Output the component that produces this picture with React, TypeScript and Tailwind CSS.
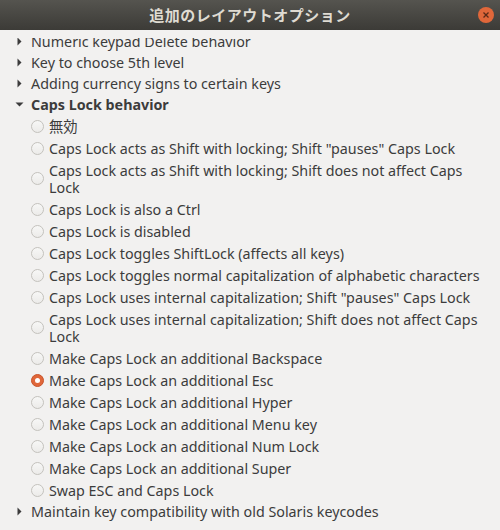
import React from "react";

type Item =
  | { kind: "tree"; label: string; open?: boolean; bold?: boolean }
  | { kind: "radio"; label: string; checked?: boolean; two?: boolean };

const items: Item[] = [
  { kind: "tree", label: "Numeric keypad Delete behavior" },
  { kind: "tree", label: "Key to choose 5th level" },
  { kind: "tree", label: "Adding currency signs to certain keys" },
  { kind: "tree", label: "Caps Lock behavior", open: true, bold: true },
  { kind: "radio", label: "無効" },
  { kind: "radio", label: 'Caps Lock acts as Shift with locking; Shift "pauses" Caps Lock' },
  { kind: "radio", label: "Caps Lock acts as Shift with locking; Shift does not affect Caps Lock", two: true },
  { kind: "radio", label: "Caps Lock is also a Ctrl" },
  { kind: "radio", label: "Caps Lock is disabled" },
  { kind: "radio", label: "Caps Lock toggles ShiftLock (affects all keys)" },
  { kind: "radio", label: "Caps Lock toggles normal capitalization of alphabetic characters" },
  { kind: "radio", label: 'Caps Lock uses internal capitalization; Shift "pauses" Caps Lock' },
  { kind: "radio", label: "Caps Lock uses internal capitalization; Shift does not affect Caps Lock", two: true },
  { kind: "radio", label: "Make Caps Lock an additional Backspace" },
  { kind: "radio", label: "Make Caps Lock an additional Esc", checked: true },
  { kind: "radio", label: "Make Caps Lock an additional Hyper" },
  { kind: "radio", label: "Make Caps Lock an additional Menu key" },
  { kind: "radio", label: "Make Caps Lock an additional Num Lock" },
  { kind: "radio", label: "Make Caps Lock an additional Super" },
  { kind: "radio", label: "Swap ESC and Caps Lock" },
  { kind: "tree", label: "Maintain key compatibility with old Solaris keycodes" },
];

function Radio({ checked }: { checked?: boolean }) {
  if (checked)
    return (
      <span className="w-[13px] h-[13px] rounded-full bg-[#e0673a] border border-[#c9542b] flex items-center justify-center shrink-0">
        <span className="w-[5px] h-[5px] rounded-full bg-white" />
      </span>
    );
  return (
    <span className="w-[13px] h-[13px] rounded-full border border-[#c4c2bd] bg-gradient-to-b from-[#f7f7f6] to-[#ecebe9] shrink-0" />
  );
}

function Arrow({ open }: { open?: boolean }) {
  return open ? (
    <svg width="9" height="9" viewBox="0 0 9 9" className="shrink-0">
      <polygon points="0.5,2.5 8.5,2.5 4.5,6.5" fill="#3c3c3c" />
    </svg>
  ) : (
    <svg width="9" height="9" viewBox="0 0 9 9" className="shrink-0">
      <polygon points="2.5,0.5 6.5,4.5 2.5,8.5" fill="#3c3c3c" />
    </svg>
  );
}

export default function App() {
  return (
    <div
      className="w-[500px] h-[530px] bg-[#f2f1f0] flex flex-col overflow-hidden text-[#3c3c3c]"
      style={{ fontFamily: '"Noto Sans", "Noto Sans CJK JP", sans-serif' }}
    >
      <div className="h-[30px] shrink-0 bg-gradient-to-b from-[#55544f] to-[#3c3b37] flex items-center justify-center relative">
        <span className="text-[15px] font-semibold text-[#dfdbd2] tracking-[0.5px]">追加のレイアウトオプション</span>
        <span className="absolute right-[6px] top-[7px] w-[16px] h-[16px] rounded-full bg-[#e0673a] flex items-center justify-center">
          <svg width="8" height="8" viewBox="0 0 8 8">
            <path d="M1.5 1.5 L6.5 6.5 M6.5 1.5 L1.5 6.5" stroke="#5a2a18" strokeWidth="1.3" />
          </svg>
        </span>
      </div>
      <div className="flex-1 pt-[8px] flex flex-col min-h-0">
        <div className="flex-1 overflow-hidden">
          <div className="flex flex-col mt-[-7px] text-[14.3px]">
            {items.map((it, i) =>
              it.kind === "tree" ? (
                <div key={i} className="h-[21px] flex items-center pl-[15px] gap-[7px] whitespace-nowrap">
                  <Arrow open={it.open} />
                  <span className={it.bold ? "font-bold" : ""}>{it.label}</span>
                </div>
              ) : (
                <div key={i} className="flex items-center pl-[31px] gap-[5px] py-[2.5px] leading-[17px]">
                  <Radio checked={it.checked} />
                  <span className="pr-[14px]">{it.label}</span>
                </div>
              )
            )}
          </div>
        </div>
      </div>
    </div>
  );
}
